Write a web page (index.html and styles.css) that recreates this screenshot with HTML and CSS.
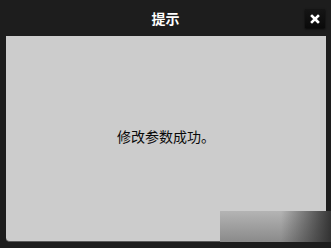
FILE: index.html
```html
<!DOCTYPE html>
<html lang="zh">
<head>
<meta charset="utf-8">
<title>提示</title>
<link rel="stylesheet" href="styles.css">
</head>
<body>
<div class="dialog">
  <div class="titlebar">
    <span class="title">提示</span>
    <button class="close" aria-label="关闭">
      <svg width="10" height="10" viewBox="0 0 10 10"><path d="M2 2 L8 8 M8 2 L2 8" stroke="#fff" stroke-width="2.6" stroke-linecap="square"/></svg>
    </button>
  </div>
  <div class="panel">
    <p class="msg">修改参数成功。</p>
  </div>
  <div class="shade"></div>
</div>
</body>
</html>
```
FILE: styles.css
```css
html, body {
  margin: 0;
  padding: 0;
  background: #1d1d1d;
}
.dialog {
  position: relative;
  width: 331px;
  height: 248px;
  display: flex;
  flex-direction: column;
  font-family: "Noto Sans CJK SC", "Liberation Sans", sans-serif;
}
.titlebar {
  position: relative;
  height: 36px;
  display: flex;
  align-items: center;
  justify-content: center;
}
.title {
  color: #ffffff;
  font-size: 14px;
  font-weight: bold;
}
.close {
  position: absolute;
  right: 6px;
  top: 9px;
  width: 20px;
  height: 19px;
  padding: 0;
  border: none;
  background: linear-gradient(#151515, #0a0a0a);
  box-shadow: 0 1px 2px rgba(0,0,0,0.8);
  display: flex;
  align-items: center;
  justify-content: center;
}
.panel {
  margin: 0 5px 6px 6px;
  height: 206px;
  background: #cccccc;
  border-radius: 0 0 0 4px;
  border-bottom: 1px solid #5a5a5a;
  box-sizing: border-box;
  display: flex;
  align-items: center;
  justify-content: center;
}
.msg {
  margin: 0 0 6px 0;
  font-size: 14px;
  color: #0a0a0a;
}
.shade {
  position: absolute;
  left: 220px;
  top: 211px;
  width: 111px;
  height: 31px;
  background-color: #999999;
  background-image:
    linear-gradient(90deg, rgba(40,40,40,0) 55%, rgba(40,40,40,0.9) 100%),
    linear-gradient(180deg, #b4b4b4, #8a8a8a);
}
```
